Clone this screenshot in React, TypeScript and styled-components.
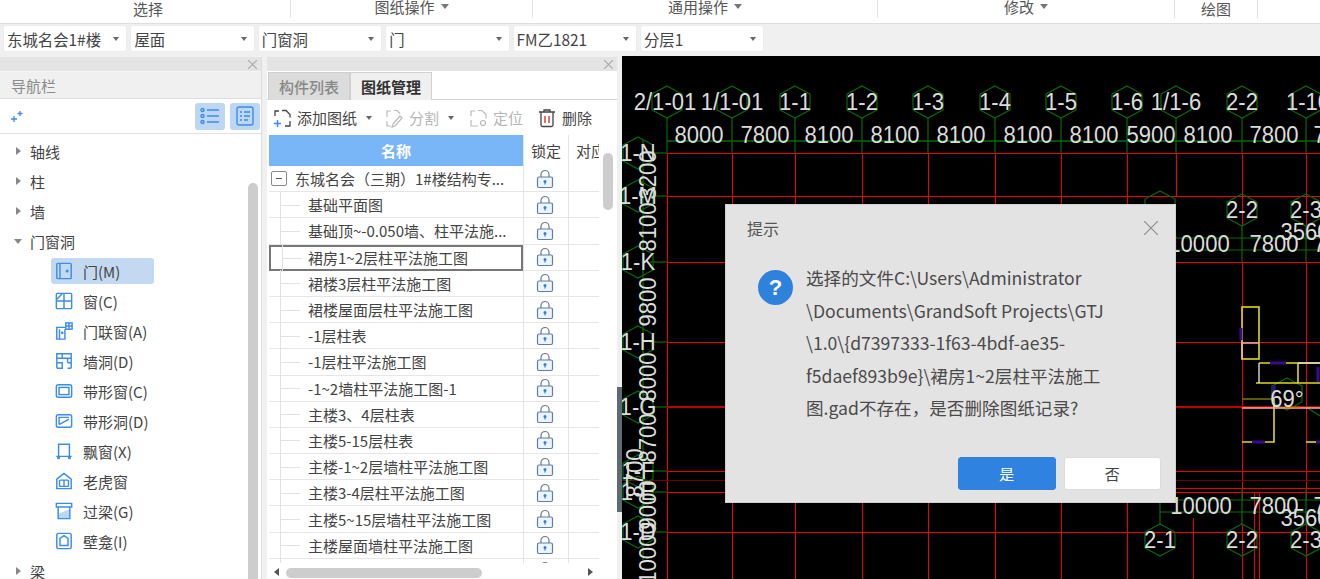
import React from "react";
import styled, { createGlobalStyle } from "styled-components";

const FONT = `"Noto Sans CJK SC", "Noto Sans", "Liberation Sans", sans-serif`;
const BLUE = "#3c8ceb";

const Global = createGlobalStyle`
  html, body { margin: 0; padding: 0; background: #f0f0f0; }
  * { box-sizing: border-box; }
  body { font-family: ${FONT}; color: #444; overflow: hidden; }
`;

const Page = styled.div`
  width: 1320px; height: 579px; overflow: hidden; position: relative;
  display: flex; flex-direction: column; background: #f0f0f0;
`;
const Ribbon = styled.div`
  height: 24px; flex: none; display: flex; background: #fff; border-bottom: 1px solid #dedede; overflow: hidden;
`;
const RibbonGroup = styled.div<{ $w: number; $raise?: boolean; $shift?: number }>`
  width: ${p => p.$w}px; flex: none; border-right: 1px solid #e3e3e3;
  display: flex; align-items: center; justify-content: center; gap: 6px;
  font-size: 15px; color: #555; line-height: 18px;
  padding-left: ${p => p.$shift ?? 0}px;
  margin-top: ${p => (p.$raise ? -5 : 0)}px;
  height: ${p => (p.$raise ? 23 : 18)}px;
`;
const TriDown = styled.span<{ $c?: string }>`
  display: inline-block; width: 0; height: 0; flex: none;
  border-left: 4px solid transparent; border-right: 4px solid transparent;
  border-top: 5px solid ${p => p.$c || "#777"};
`;
const TriRight = styled.span`
  display: inline-block; width: 0; height: 0; flex: none;
  border-top: 4px solid transparent; border-bottom: 4px solid transparent;
  border-left: 5px solid #888;
`;
const Toolbar = styled.div`
  height: 32px; flex: none; display: flex; align-items: center; gap: 3px; padding: 0 0 3px 3px; background: #f0f0f0;
`;
const Select = styled.div`
  width: 124.4px; height: 27px; background: #fff; border-radius: 3px; border: 1px solid #ececec;
  display: flex; align-items: center; justify-content: space-between; padding: 0 7px 0 3px;
  font-size: 15.4px; color: #444;
`;
const SmallTri = styled(TriDown)`
  border-left-width: 3px; border-right-width: 3px; border-top-width: 4px; border-top-color: #666;
`;
const Workspace = styled.div`
  flex: 1; display: flex; min-height: 0; padding-top: 1px;
`;
const LeftPanel = styled.div`
  width: 262px; flex: none; display: flex; flex-direction: column; background: #fff; border-right: 1px solid #ddd; overflow: hidden;
`;
const Gutter = styled.div`
  width: 5px; flex: none; background: #f0f0f0;
`;
const MiddlePanel = styled.div`
  width: 350px; flex: none; display: flex; flex-direction: column; background: #fff; overflow: hidden;
`;
const Splitter = styled.div`
  width: 5px; flex: none; background: #f0f0f0; margin-top: -1px; padding-top: 331px;
`;
const SplitHandle = styled.div`
  width: 5px; height: 125px; background: #5f6a75;
`;
const Strip = styled.div`
  height: 14px; flex: none; background: #e4e4e4; display: flex; align-items: center; justify-content: flex-end;
  padding-right: 4px; color: #aaa;
`;
const NavTitle = styled.div`
  height: 28px; flex: none; background: #f0f0f0; border-top: 1px solid #f5f5f5; border-bottom: 1px solid #ddd;
  display: flex; align-items: center; padding-left: 11px; font-size: 15px; color: #8a8a8a;
`;
const NavTools = styled.div`
  height: 35px; flex: none; display: flex; align-items: center; border-bottom: 1px solid #e2e2e2; padding: 0 1px 0 10px; gap: 5px;
`;
const NavSpacer = styled.div`
  flex: 1;
`;
const NavToggle = styled.div`
  width: 30px; height: 27px; border-radius: 3px; background: #bdd7f3; display: flex; align-items: center; justify-content: center;
`;
const TreeArea = styled.div`
  flex: 1; position: relative; overflow: hidden; padding-top: 2px; display: flex; flex-direction: column;
`;
const TreeHead = styled.div`
  height: 30px; flex: none; display: flex; align-items: center; font-size: 15px; color: #444; padding-left: 15px; gap: 9px;
`;
const ArrowSlot = styled.span`
  width: 6px; display: flex; justify-content: center;
`;
const TreeItem = styled.div<{ $active?: boolean }>`
  height: 26px; flex: none; margin: 2px 0 2px 51px; width: 103px; display: flex; align-items: center; gap: 10px;
  padding-left: 4px; font-size: 15px; color: #444; border-radius: 3px; white-space: nowrap;
  background: ${p => (p.$active ? "#c3d9f1" : "transparent")};
`;
const ScrollThumbV = styled.div`
  position: absolute; left: 248px; top: 49px; width: 10px; height: 420px; background: #cdcdcd; border-radius: 5px;
`;
const TabBar = styled.div`
  height: 29px; flex: none; display: flex; padding: 1px 0 0 1px; background: #fff; border-bottom: 1px solid #d4d4d4;
`;
const Tab = styled.div<{ $active?: boolean }>`
  width: 82px; height: 28px; display: flex; align-items: center; justify-content: center; font-size: 15px;
  background: ${p => (p.$active ? "#f0f0f0" : "#dcdcdc")};
  color: ${p => (p.$active ? "#333" : "#888")};
  font-weight: ${p => (p.$active ? 700 : 500)};
  border: 1px solid #d0d0d0; border-bottom: none;
`;
const DocTools = styled.div`
  height: 35px; flex: none; display: flex; align-items: center; padding-left: 5px; font-size: 15px; color: #444;
`;
const DocTool = styled.div<{ $off?: boolean; $gap?: number }>`
  display: flex; align-items: center; gap: 5px; color: ${p => (p.$off ? "#b5b5b5" : "#444")}; margin-right: ${p => p.$gap ?? 8}px; flex: none;
`;
const TableWrap = styled.div`
  flex: 1; position: relative; overflow: hidden;
`;
const Table = styled.div`
  margin-left: 2px; width: 330px; height: 428px; overflow: hidden;
`;
const HeadRow = styled.div`
  height: 31px; display: flex; font-size: 15px;
`;
const NameHead = styled.div`
  width: 254px; background: #78b6f7; color: #fff; font-weight: 700; display: flex; align-items: center; justify-content: center;
`;
const SideHead = styled.div<{ $w: number }>`
  width: ${p => p.$w}px; display: flex; align-items: center; border-left: 1px solid #e4e4e4; color: #444; overflow: hidden; white-space: nowrap; flex: none;
  justify-content: ${p => (p.$w < 40 ? "flex-start" : "center")}; padding-left: ${p => (p.$w < 40 ? 7 : 0)}px;
`;
const Row = styled.div`
  height: 26.2px; display: flex; border-bottom: 1px solid #e6e6e6; font-size: 15px; color: #444;
`;
const NameCell = styled.div<{ $selected?: boolean }>`
  width: 254px; flex: none; position: relative; display: flex; align-items: center; padding-left: 39px; white-space: nowrap;
  border: ${p => (p.$selected ? "2px solid #777" : "none")};
  margin-bottom: ${p => (p.$selected ? -1 : 0)}px;
  ${p => (p.$selected ? "padding-left: 37px;" : "")}
`;
const RootCell = styled(NameCell)`
  padding-left: 2px; gap: 8px;
`;
const Guide = styled.span`
  position: absolute; left: 11px; top: 50%; width: 20px; border-top: 1px solid #e2e2e2;
  &::before { content: ""; position: absolute; left: 0; top: -14px; height: 27px; border-left: 1px solid #e2e2e2; }
`;
const MinusBox = styled.span`
  width: 16px; height: 15px; border: 1px solid #8a8a8a; border-radius: 2px; display: flex; align-items: center; justify-content: center; flex: none;
  &::after { content: ""; width: 6px; border-top: 1px solid #555; }
`;
const LockCell = styled.div`
  width: 45px; flex: none; display: flex; align-items: center; justify-content: center; border-left: 1px solid #e4e4e4; padding-right: 2px;
`;
const EmptyCell = styled.div`
  width: 31px; flex: none; border-left: 1px solid #e4e4e4;
`;
const VThumb = styled.div`
  position: absolute; left: 336px; top: 18px; width: 10px; height: 57px; background: #cdcdcd; border-radius: 5px;
`;
const HScroll = styled.div`
  position: absolute; left: 0; right: 0; top: 429px; height: 16px; background: #fff; display: flex; align-items: center; padding: 0 24px 0 7px;
  justify-content: space-between;
`;
const HThumb = styled.div`
  position: absolute; left: 19px; top: 4px; width: 196px; height: 10px; background: #cdcdcd; border-radius: 5px;
`;
const TriSmallLeft = styled.span`
  width: 0; height: 0; border-top: 4px solid transparent; border-bottom: 4px solid transparent; border-right: 5px solid #555;
`;
const TriSmallRight = styled.span`
  width: 0; height: 0; border-top: 4px solid transparent; border-bottom: 4px solid transparent; border-left: 5px solid #555;
`;
const Canvas = styled.div`
  flex: 1; background: #000; margin-top: -1px; position: relative; overflow: hidden;
`;
const CadSvg = styled.svg`
  display: block; width: 698px; height: 523px;
`;
const CadLabel = styled.text`
  font-family: "Liberation Sans", sans-serif; font-size: 24px; fill: #dcdcdc;
`;
const Dialog = styled.div`
  position: absolute; left: 103px; top: 148px; width: 451px; height: 299px; background: #e4e3e3; border: 1px solid #d2d2d2;
  display: flex; flex-direction: column; padding: 11px 14px 12px 21px;
`;
const DialogHead = styled.div`
  display: flex; justify-content: space-between; align-items: center; height: 24px; font-size: 16px; color: #555; padding-right: 3px;
`;
const DialogBody = styled.div`
  display: flex; gap: 13px; margin-top: 19px; flex: 1; padding-left: 11px;
`;
const QIcon = styled.div`
  width: 35px; height: 35px; border-radius: 50%; background: #2f82dc; color: #fff; flex: none; margin-top: 11px;
  display: flex; align-items: center; justify-content: center; font-size: 22px; font-weight: 700; font-family: "Liberation Sans", sans-serif;
`;
const Message = styled.div`
  font-size: 17.6px; line-height: 32.5px; color: #4a4a4a; white-space: nowrap; padding-top: 3px;
`;
const MsgLine = styled.div``;
const DialogFoot = styled.div`
  display: flex; justify-content: flex-end; gap: 8px;
`;
const DButton = styled.div<{ $primary?: boolean }>`
  width: 97.5px; height: 33px; border-radius: 3px; display: flex; align-items: center; justify-content: center; font-size: 15px;
  background: ${p => (p.$primary ? "#2f82e0" : "#fff")};
  color: ${p => (p.$primary ? "#fff" : "#444")};
  border: 1px solid ${p => (p.$primary ? "#2f82e0" : "#dcdcdc")};
`;

const Ic: React.FC<{ children: React.ReactNode; size?: number }> = ({ children, size = 20 }) => (
  <svg width={size} height={size} viewBox="0 0 20 20" fill="none" stroke={BLUE} strokeWidth={1.6}>{children}</svg>
);

const CloseX = ({ size = 9, c = "#a8a8a8", w = 1 }: { size?: number; c?: string; w?: number }) => (
  <svg width={size} height={size} viewBox="0 0 8 8" stroke={c} strokeWidth={w}><path d="M0 0L8 8M8 0L0 8" /></svg>
);

const Lock = () => (
  <svg width="18" height="20" viewBox="0 0 18 20" fill="none">
    <path d="M5 8V5.5a4 4 0 0 1 8 0V8" stroke="#6b7a8c" strokeWidth="1.2" />
    <rect x="1.5" y="8" width="15" height="10.5" rx="1.5" stroke="#5e7ea8" strokeWidth="1.2" fill="#eef4fb" />
    <circle cx="9" cy="12.5" r="1.5" fill="#2f82e0" />
    <rect x="8.4" y="12.5" width="1.2" height="3" fill="#2f82e0" />
  </svg>
);

const itemIcons: Record<string, React.ReactNode> = {
  door: <><rect x="2" y="1.5" width="16" height="17" rx="1" /><path d="M5.5 2v16" /><circle cx="13.5" cy="10" r=".9" fill={BLUE} /></>,
  win: <><rect x="1.5" y="1.5" width="17" height="17" rx="1" /><path d="M10 1.5v17M1.5 10h17M2 8l6-6" /></>,
  doorwin: <><path d="M12 6H2v13h9V8M5 8v11" /><rect x="12" y="1" width="7" height="7" /><path d="M15.5 1v7M12 4.5h7" /><circle cx="8" cy="12" r=".7" fill={BLUE} /></>,
  hole: <><path d="M2 18V2h16v16M2 7h16M2 12h6v6H2M14 12h4M14 7v5M8 2v5M14 18h4" /></>,
  band: <><rect x="1.5" y="3" width="17" height="14" rx="2" /><rect x="4.5" y="6" width="11" height="8" /></>,
  bandh: <><rect x="1.5" y="3" width="17" height="14" rx="2" /><path d="M4.5 14V6h11M4.5 14l11-6" /></>,
  bay: <><path d="M4 16V2.5h12V16M1.5 16h17" /><circle cx="4" cy="17.5" r="1" /><circle cx="16" cy="17.5" r="1" /></>,
  dormer: <><path d="M10 1.5L2 8v10.5h16V8z" /><rect x="5" y="9" width="10" height="7" rx="1" /><path d="M10 9v7" /></>,
  lintel: <><path d="M3.5 13l13-5v10h-13z" fill="#bcd6f5" stroke="none" /><path d="M1.5 1.5h17v4h-17zM3.5 5.5v13h13v-13" /></>,
  niche: <><rect x="2" y="1.5" width="16" height="17" rx="2" /><path d="M5.5 15V7l4.5-3 4.5 3v8z" /></>,
};

const items: [string, string][] = [
  ["door", "门(M)"], ["win", "窗(C)"], ["doorwin", "门联窗(A)"], ["hole", "墙洞(D)"], ["band", "带形窗(C)"],
  ["bandh", "带形洞(D)"], ["bay", "飘窗(X)"], ["dormer", "老虎窗"], ["lintel", "过梁(G)"], ["niche", "壁龛(I)"],
];

const rows = [
  "基础平面图", "基础顶~-0.050墙、柱平法施...", "裙房1~2层柱平法施工图", "裙楼3层柱平法施工图", "裙楼屋面层柱平法施工图",
  "-1层柱表", "-1层柱平法施工图", "-1~2墙柱平法施工图-1", "主楼3、4层柱表", "主楼5-15层柱表",
  "主楼-1~2层墙柱平法施工图", "主楼3-4层柱平法施工图", "主楼5~15层墙柱平法施工图", "主楼屋面墙柱平法施工图", "",
];

const selects = ["东城名会1#楼", "屋面", "门窗洞", "门", "FM乙1821", "分层1"];

const RED = "#ee0000";
const GREEN = "#0a6a0a";
const hex = (x: number, y: number) =>
  `${x},${y - 16} ${x + 15},${y - 8} ${x + 15},${y + 8} ${x},${y + 16} ${x - 15},${y + 8} ${x - 15},${y - 8}`;

const L = ({ x, y, t, r }: { x: number; y: number; t: string; r?: boolean }) => (
  <CadLabel
    textAnchor="middle"
    transform={r ? `translate(${x},${y}) rotate(-90) scale(.92,1)` : `translate(${x},${y}) scale(.92,1)`}
  >{t}</CadLabel>
);

const vx = [667, 732, 795, 862, 928, 995, 1061, 1127, 1242, 1306];
const hy = [153, 196, 262, 342, 471, 492, 532];
const topLabels: [number, string][] = [[795, "1-1"], [862, "1-2"], [928, "1-3"], [995, "1-4"], [1061, "1-5"], [1127, "1-6"], [1242, "2-2"], [1308, "1-10"]];
const dims: [number, string][] = [[699, "8000"], [765, "7800"], [829, "8100"], [895, "8100"], [961, "8100"], [1028, "8100"], [1094, "8100"], [1151, "5900"], [1208, "8100"], [1274, "7800"], [1338, "7800"]];
const sideLabels: [number, string][] = [[153, "1-N"], [196, "1-M"], [262, "1-K"], [342, "1-H"], [407, "1-G"], [471, "1-F"], [492, "1-E"], [532, "1-D"]];
const sideDims: [number, string][] = [[175, "3200"], [227, "8100"], [302, "9800"], [377, "8000"], [438, "8700"], [505, "9000"], [553, "10000"]];

const Cad = () => (
  <CadSvg viewBox="622 56 698 523">
    <g stroke={RED} strokeWidth="1" fill="none" shapeRendering="crispEdges">
      {vx.map(x => <path key={x} d={x >= 1242 ? `M${x} 153V225M${x} 262V500` : `M${x} 153V579`} />)}
      <path d="M1242 525V579M1306 525V579" />
      <path d="M1176 153V196M1193 518V579M1254 493V579M1259 493V579" />
      {hy.map(y => <path key={y} d={`M667 ${y}H1320`} />)}
      <path d="M667 407H1320" strokeWidth="2" stroke="#c00000" />
      <path d="M622 480H1320" stroke="#6a0000" />
      <path d="M1175 488H1320" />
    </g>
    <g stroke={GREEN} strokeWidth="1.2" fill="none">
      <path d="M667 141H1320" strokeWidth="1.4" />
      {[667, 732, ...vx.slice(2), 1176].map(x => <path key={x} d={`M${x} 118V153`} />)}
      <polygon points={hex(667, 102)} />
      <polygon points={hex(732, 102)} />
      <polygon points={hex(1176, 102)} />
      {topLabels.map(([x]) => <polygon key={x} points={hex(x === 1308 ? 1306 : x, 102)} />)}
      {sideLabels.map(([y]) => <polygon key={y} points={hex(638, y)} />)}
      {sideLabels.map(([y]) => <path key={y} d={`M650 ${y}H667`} />)}
      <path d="M643 140V560" />
      <path d="M1176 238H1320M1176 250H1320M1160 500H1320M1160 512H1320" />
      <polygon points={hex(1242, 210)} /><polygon points={hex(1306, 210)} />
      <polygon points={hex(1160, 207)} />
      <path d="M1242 226V262M1306 226V262M1242 490V525M1306 490V525M1160 503V525" />
      <polygon points={hex(1160, 540)} /><polygon points={hex(1242, 540)} /><polygon points={hex(1306, 540)} />
      <polygon points={hex(1287, 394)} />
      <path d="M1306 407L1320 416" />
    </g>
    <g stroke="#e0d820" strokeWidth="1.6" fill="none">
      <rect x="1242" y="307" width="17" height="52" />
      <path d="M1259 363H1320M1256 383H1320M1298 363V383" />
      <path d="M1242 442H1274V399" />
      <path d="M1242 399H1274" stroke="#777000" />
      <path d="M1306 442H1320" />
    </g>
    <g stroke="#dddddd" strokeWidth="1.4" fill="none">
      <path d="M1259 363V383M1298 363H1320" />
    </g>
    <path d="M1242 343H1259M1242 343V359M1242 408H1320" stroke="#f2b0b0" strokeWidth="1.4" fill="none" />
    <path d="M1285 407.5H1300" stroke="#e07010" strokeWidth="1.6" />
    <g stroke="#3b0a8c" strokeWidth="3" fill="none">
      <path d="M1241 328V340M1270 363H1286M1318 367V382M1274 385V398M1252 442H1265M1316 442H1320" />
    </g>
    {topLabels.map(([x, t]) => <L key={x} x={x} y={110} t={t} />)}
    <L x={665} y={110} t="2/1-01" /><L x={732} y={110} t="1/1-01" /><L x={1176} y={110} t="1/1-6" />
    {dims.map(([x, t]) => <L key={x} x={x} y={143} t={t} />)}
    {sideLabels.map(([y, t]) => <L key={y} x={638} y={y + 8} t={t} />)}
    {sideDims.map(([y, t]) => <L key={y} x={656} y={y} t={t} r />)}
    <L x={643} y={473} t="8700" r />
    <L x={1242} y={218} t="2-2" /><L x={1306} y={218} t="2-3" />
    <L x={1305} y={240} t="3560" />
    <L x={1199} y={252} t="10000" /><L x={1274} y={252} t="7800" /><L x={1338} y={252} t="7800" />
    <L x={1287} y={407} t="69°" />
    <L x={1201} y={514} t="10000" /><L x={1274} y={514} t="7800" /><L x={1338} y={514} t="7800" />
    <L x={1305} y={526} t="3560" />
    <L x={1160} y={548} t="2-1" /><L x={1242} y={548} t="2-2" /><L x={1306} y={548} t="2-3" />
  </CadSvg>
);

export default function App() {
  return (
    <Page>
      <Global />
      <Ribbon>
        <RibbonGroup $w={291} $shift={6}>选择</RibbonGroup>
        <RibbonGroup $w={242} $raise>图纸操作<TriDown /></RibbonGroup>
        <RibbonGroup $w={345} $raise>通用操作<TriDown /></RibbonGroup>
        <RibbonGroup $w={297} $raise>修改<TriDown /></RibbonGroup>
        <RibbonGroup $w={83}>绘图</RibbonGroup>
      </Ribbon>
      <Toolbar>
        {selects.map(s => <Select key={s}>{s}<SmallTri /></Select>)}
      </Toolbar>
      <Workspace>
        <LeftPanel>
          <Strip><CloseX /></Strip>
          <NavTitle>导航栏</NavTitle>
          <NavTools>
            <svg width="14" height="14" viewBox="0 0 14 14" stroke={BLUE} strokeWidth="1.3" fill="none">
              <path d="M4 7v6M1 10h6M10 2v5M7.5 4.5h5" />
            </svg>
            <NavSpacer />
            <NavToggle>
              <svg width="20" height="18" viewBox="0 0 20 18" stroke={BLUE} strokeWidth="1.4" fill="none">
                <circle cx="2.5" cy="3" r="1.5" /><circle cx="2.5" cy="9" r="1.5" /><circle cx="2.5" cy="15" r="1.5" />
                <path d="M7 3h12M7 9h12M7 15h12" />
              </svg>
            </NavToggle>
            <NavToggle>
              <svg width="18" height="20" viewBox="0 0 18 20" stroke={BLUE} strokeWidth="1.4" fill="none">
                <rect x="1" y="1" width="16" height="18" rx="2" />
                <path d="M4 6h2M8 6h6M4 10h2M8 10h6M4 14h2M8 14h4" />
              </svg>
            </NavToggle>
          </NavTools>
          <TreeArea>
            {["轴线", "柱", "墙"].map(t => <TreeHead key={t}><ArrowSlot><TriRight /></ArrowSlot>{t}</TreeHead>)}
            <TreeHead><ArrowSlot><TriDown $c="#888" /></ArrowSlot>门窗洞</TreeHead>
            {items.map(([k, t], i) => (
              <TreeItem key={k} $active={i === 0}><Ic size={18}>{itemIcons[k]}</Ic>{t}</TreeItem>
            ))}
            <TreeHead><ArrowSlot><TriRight /></ArrowSlot>梁</TreeHead>
            <ScrollThumbV />
          </TreeArea>
        </LeftPanel>
        <Gutter />
        <MiddlePanel>
          <Strip><CloseX /></Strip>
          <TabBar>
            <Tab>构件列表</Tab>
            <Tab $active>图纸管理</Tab>
          </TabBar>
          <DocTools>
            <DocTool $gap={9}>
              <svg width="20" height="20" viewBox="0 0 20 20" fill="none" stroke="#444" strokeWidth="1.3">
                <path d="M3 8V3h4M10 2.5h4l4 4v3M18 13v5h-5" />
                <path d="M5.5 12v7M2 15.5h7" stroke={BLUE} strokeWidth="1.5" />
              </svg>
              添加图纸
            </DocTool>
            <DocTool $gap={12}><SmallTri /></DocTool>
            <DocTool $off $gap={9}>
              <svg width="20" height="20" viewBox="0 0 20 20" fill="none" stroke="#bbb" strokeWidth="1.2">
                <path d="M3 9V3h4M10 2.5h3l3 3M3 13v5h4" />
                <path d="M9 16l7-8 2 2-7 8-3 1z" />
              </svg>
              分割
            </DocTool>
            <DocTool $off $gap={14}><SmallTri /></DocTool>
            <DocTool $off $gap={14}>
              <svg width="20" height="20" viewBox="0 0 20 20" fill="none" stroke="#bbb" strokeWidth="1.2">
                <path d="M3 8V3h4M10 2.5h4l4 4v4M3 12v6h7" />
                <circle cx="15" cy="15" r="2.5" />
              </svg>
              定位
            </DocTool>
            <DocTool $gap={0}>
              <svg width="20" height="20" viewBox="0 0 20 20" fill="none" stroke="#444" strokeWidth="1.3">
                <path d="M2 4h16M7 4V2h6v2M4 4v13a1.5 1.5 0 0 0 1.5 1.5h9A1.5 1.5 0 0 0 16 17V4" />
                <path d="M8 8v7M12 8v7" stroke="#e03030" strokeWidth="1.4" />
              </svg>
              删除
            </DocTool>
          </DocTools>
          <TableWrap>
            <Table>
              <HeadRow>
                <NameHead>名称</NameHead>
                <SideHead $w={45}>锁定</SideHead>
                <SideHead $w={31}>对应</SideHead>
              </HeadRow>
              <Row>
                <RootCell><MinusBox />东城名会（三期）1#楼结构专...</RootCell>
                <LockCell><Lock /></LockCell>
                <EmptyCell />
              </Row>
              {rows.map((r, i) => (
                <Row key={i}>
                  <NameCell $selected={i === 2}><Guide />{r}</NameCell>
                  <LockCell><Lock /></LockCell>
                  <EmptyCell />
                </Row>
              ))}
            </Table>
            <VThumb />
            <HScroll>
              <TriSmallLeft />
              <HThumb />
              <TriSmallRight />
            </HScroll>
          </TableWrap>
        </MiddlePanel>
        <Splitter><SplitHandle /></Splitter>
        <Canvas>
          <Cad />
          <Dialog>
            <DialogHead>提示<CloseX size={14} c="#8f8f8f" w={0.7} /></DialogHead>
            <DialogBody>
              <QIcon>?</QIcon>
              <Message>
                <MsgLine>选择的文件C:\Users\Administrator</MsgLine>
                <MsgLine>\Documents\GrandSoft Projects\GTJ</MsgLine>
                <MsgLine>\1.0\{"{"}d7397333-1f63-4bdf-ae35-</MsgLine>
                <MsgLine>f5daef893b9e{"}"}\裙房1~2层柱平法施工</MsgLine>
                <MsgLine>图.gad不存在，是否删除图纸记录?</MsgLine>
              </Message>
            </DialogBody>
            <DialogFoot>
              <DButton $primary>是</DButton>
              <DButton>否</DButton>
            </DialogFoot>
          </Dialog>
        </Canvas>
      </Workspace>
    </Page>
  );
}
